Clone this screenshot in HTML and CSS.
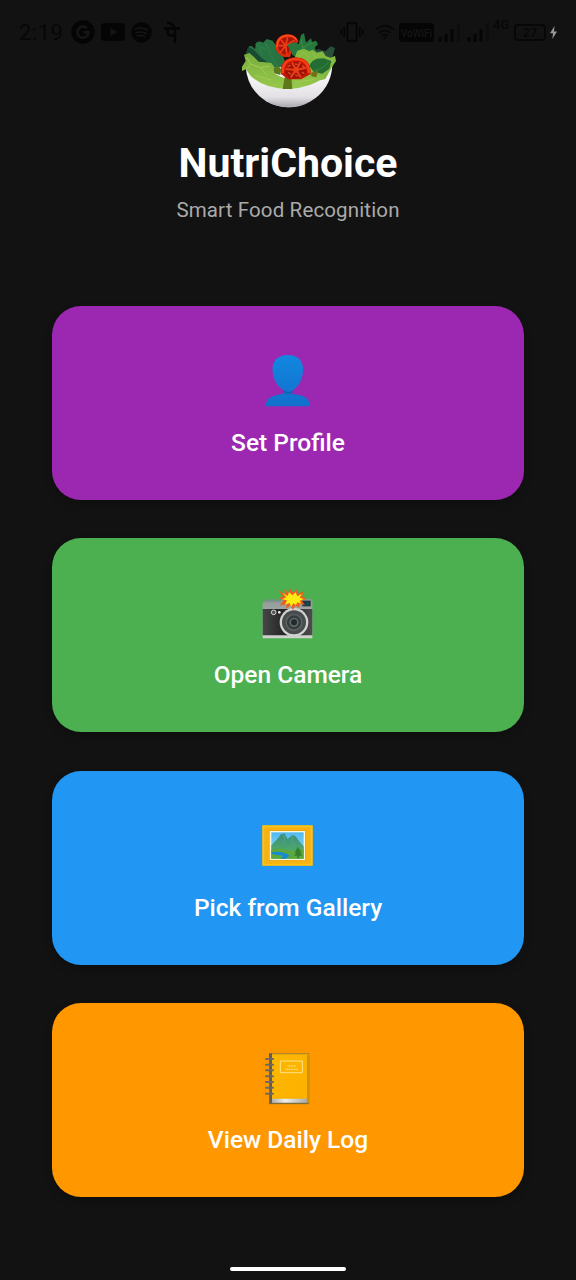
FILE: index.html
```html
<!DOCTYPE html>
<html lang="en">
  <head>
    <meta charset="UTF-8" />
    <meta name="viewport" content="width=device-width, initial-scale=1.0" />
    <title>NutriChoice</title>
    <link rel="stylesheet" href="styles.css">
  </head>
  <body>
    <!-- System status bar, drawn over the page -->
    <div class="status-bar">
      <div class="status-group">
        <span class="clock">2:19</span>
        <svg width="24" height="24" viewBox="0 0 24 24">
          <circle cx="12" cy="12" r="11.7" fill="#050505" />
          <path d="M16 8.2A5.6 5.6 0 1 0 17.6 12.4H12.5" fill="none" stroke="#151515" stroke-width="2.6" />
        </svg>
        <svg width="24" height="18" viewBox="0 0 24 18">
          <rect width="24" height="18" rx="4" fill="#050505" />
          <path d="M9.5 5v8l7-4z" fill="#151515" />
        </svg>
        <svg width="21" height="21" viewBox="0 0 21 21">
          <circle cx="10.5" cy="10.5" r="10.3" fill="#050505" />
          <path d="M4 7q7-2.3 13 1M4.7 10.7q6-1.8 11 1M5.5 14q5-1.3 9 .8" fill="none" stroke="#151515" stroke-width="1.7" />
        </svg>
        <svg class="pay-icon" width="16" height="23" viewBox="0 0 16 23">
          <path d="M0 7.5H16M3 1.5Q9 2 11 7.5V22M3.8 7.5V12Q4 15 7.5 14.5L11 13.5" fill="none" stroke="#050505" stroke-width="2.4" />
        </svg>
      </div>
      <div class="status-group status-right">
        <svg width="24" height="20" viewBox="0 0 24 20">
          <path d="M7.5 1h9v18h-9zM4.3 5v10M1.2 7.5v5M19.7 5v10M22.8 7.5v5" fill="none" stroke="#050505" stroke-width="1.7" />
        </svg>
        <svg class="wifi-icon" width="20" height="16" viewBox="0 0 20 16">
          <path d="M1 5.5Q10-2 19 5.5M4 9Q10 4 16 9M7 12Q10 9.5 13 12" fill="none" stroke="#080808" stroke-width="1.7" />
          <circle cx="10" cy="14" r="1.4" fill="#080808" />
        </svg>
        <span class="vowifi">VoWiFi</span>
        <svg class="signal-icon" width="24" height="19" viewBox="0 0 24 19">
          <path d="M2 19v-5M8 19v-8M14 19V6" stroke="#050505" stroke-width="3" />
          <path d="M20.5 19V0" stroke="#0d0d0d" stroke-width="3" />
        </svg>
        <svg class="signal-icon" width="24" height="19" viewBox="0 0 24 19">
          <path d="M2 19v-5M8 19v-8M14 19V6" stroke="#050505" stroke-width="3" />
          <path d="M20.5 19V0" stroke="#0d0d0d" stroke-width="3" />
        </svg>
        <span class="network">4G</span>
        <span class="battery">27</span>
        <svg class="bolt-icon" width="7" height="13" viewBox="0 0 7 13">
          <path d="M4.5 0L0 7.2h3L2.4 13L7 5.5H4z" fill="#999" />
        </svg>
      </div>
    </div>

    <header class="header">
      <svg class="logo" viewBox="0 0 348 300">
        <defs>
          <linearGradient id="bowl" x2="0" y2="1">
            <stop offset=".3" stop-color="#f4f3f5" />
            <stop offset=".75" stop-color="#e3e1e4" />
            <stop offset="1" stop-color="#aaa8ad" />
          </linearGradient>
          <linearGradient id="lettuce" x2="0" y2="1">
            <stop offset="0" stop-color="#78ad3c" />
            <stop offset="1" stop-color="#98c94d" />
          </linearGradient>
        </defs>
        <path d="M47 140Q52 208 108 244Q174 280 242 244Q302 208 307 138Z" fill="url(#bowl)" />
        <path d="M112 246Q176 267 240 245Q210 263 174 262Q140 261 112 246Z" fill="#b5b2b8" />
        <!-- back leaves -->
        <path d="M48 100L58 78Q68 76 75 88L78 68Q90 61 99 68L110 57L128 62L140 80L160 110L170 140L110 145Z" fill="#287342" />
        <path d="M53 82Q70 83 92 112L115 129L78 131L48 106Z" fill="#174b32" />
        <path d="M76 74Q112 79 142 137M105 68L125 100M89 82L96 108" fill="none" stroke="#34804a" stroke-width="3" />
        <path d="M286 94L302 79L315 84L307 111L280 122L256 95L264 87Z" fill="#294f3b" />
        <!-- back tomato -->
        <path d="M136 82Q136 47 170 43Q195 41 206 64L190 80L180 112L161 111Q138 100 136 82Z" fill="#d92a0c" />
        <path d="M145 82Q145 54 171 50Q190 49 198 63L184 78L172 106Q147 99 145 82Z" fill="#a81508" />
        <path d="M146 77L167 77L173 51M167 77L194 61M167 77L171 106M167 77L150 98M167 77L153 59" fill="none" stroke="#e83d18" stroke-width="5" />
        <path d="M141 82Q141 50 171 47Q190 45 200 60" fill="none" stroke="#ff4b16" stroke-width="5" />
        <path d="M172 74L196 66L206 73L213 45L222 40L228 68L243 55L246 66L258 62L264 72L254 83L262 98L248 112L214 116L188 106Z" fill="#27783c" />
        <path d="M208 109L218 84L213 59M218 84L248 67" fill="none" stroke="#3b8d48" stroke-width="3" />
        <!-- light leaves -->
        <path d="M192 118L202 92L222 86L238 94L248 89L260 98L278 94L287 108L301 113L315 108L318 123L304 144L286 177L233 190Z" fill="#83b940" />
        <path d="M204 113L220 96L238 114M248 98L262 123M286 135L309 119" fill="none" stroke="#94c34c" stroke-width="3" />
        <path d="M238 137Q244 122 260 116L281 115L304 123L298 146L277 161L251 155Z" fill="#246d32" />
        <path d="M253 151Q279 148 295 127" fill="none" stroke="#358541" stroke-width="3" />
        <path d="M36 140L47 123L42 104L58 99L72 111L86 125L105 127L124 129L133 141L131 160L154 171L172 177L193 177L222 164L253 164L286 169Q242 205 175 207Q104 207 62 168L48 148L36 153Z" fill="url(#lettuce)" />
        <path d="M50 112L62 132L91 143L119 139M62 132L51 147M91 143L110 165M75 166L124 180M195 187L252 178" fill="none" stroke="#a5cb53" stroke-width="3" />
        <path d="M131 145L143 137L154 148L151 165L132 160ZM164 172L184 170L187 207L158 207Z" fill="#5e7919" />
        <path d="M243 159L264 151L259 172L244 169Z" fill="#766f19" />
        <!-- front tomato -->
        <path d="M153 162Q149 113 197 112Q244 114 242 162L213 178H174Z" fill="#c41708" />
        <path d="M158 160Q156 119 197 117Q237 119 237 160" fill="none" stroke="#f83f13" stroke-width="8" />
        <path d="M166 160Q166 128 197 125Q229 128 229 160L208 175H178Z" fill="#9e1208" />
        <path d="M198 150L186 127M198 150L211 127M198 150L229 143M198 150L167 147M198 150L213 172M198 150L182 172" fill="none" stroke="#ea3e19" stroke-width="6" />
        <circle cx="198" cy="150" r="8" fill="#ea3e19" />
        <path d="M174 139L181 136M196 132L201 133M218 137L222 143M197 165L203 168M176 158L182 162M217 157L222 160" stroke="#d94c1e" stroke-width="4" stroke-linecap="round" />
      </svg>
      <h1 class="title">NutriChoice</h1>
      <p class="subtitle">Smart Food Recognition</p>
    </header>

    <main class="menu">
      <button class="card card-profile">
        <svg class="card-icon" viewBox="0 -9 228 228">
          <defs>
            <linearGradient id="person" x2="0" y2="1">
              <stop offset="0" stop-color="#1287df" />
              <stop offset="1" stop-color="#1170cc" />
            </linearGradient>
          </defs>
          <path d="M46 184Q48 157 78 151L99 146Q108 142 102 136Q78 123 70 93Q62 58 79 42Q92 30 113 30Q135 30 148 42Q164 58 157 93Q149 124 126 137Q120 143 130 147L151 151Q179 157 181 184Z" fill="url(#person)" />
          <path d="M99 142Q114 153 129 142L126 137Q114 146 102 136Z" fill="#0b62b8" />
        </svg>
        <span class="card-label">Set Profile</span>
      </button>

      <button class="card card-camera">
        <svg class="card-icon" viewBox="0 -16 228 228">
          <defs>
            <linearGradient id="metal" x2="0" y2="1">
              <stop offset="0" stop-color="#8d9794" />
              <stop offset="1" stop-color="#d0d3d2" />
            </linearGradient>
            <linearGradient id="grip">
              <stop offset="0" stop-color="#464646" />
              <stop offset=".5" stop-color="#202020" />
              <stop offset="1" stop-color="#4d4d4d" />
            </linearGradient>
          </defs>
          <path d="M43 57H92V66H43Z" fill="#77908a" />
          <path d="M38 68Q38 64 44 64H91L96 56H181Q187 57 187 64V174H38Z" fill="url(#metal)" />
          <path d="M38 86H187V165H38Z" fill="url(#grip)" />
          <rect x="157" y="61" width="25" height="17" fill="#27333a" />
          <rect x="166" y="64" width="12" height="11" fill="#14465a" />
          <path d="M63 86H94V102H63Z" fill="#252525" />
          <circle cx="71" cy="96" r="7" fill="#555" stroke="#ddd" stroke-width="3" />
          <circle cx="88" cy="96" r="4" fill="#eee" />
          <circle cx="132" cy="126" r="43" fill="#d1d1d1" />
          <circle cx="132" cy="126" r="36" fill="#484c4d" />
          <circle cx="132" cy="126" r="26" fill="#5b6061" />
          <circle cx="132" cy="126" r="21" fill="#333b3c" />
          <circle cx="132" cy="126" r="14" fill="#606768" />
          <circle cx="132" cy="126" r="9" fill="#242a2b" />
          <path d="M82 29L105 42L103 26L115 38L120 24L130 38L141 27L144 41L163 32L156 48L169 55L155 61L165 74L148 71L148 83L136 75L129 89L121 75L108 85L110 71L89 76L101 60L87 54L100 48Z" fill="#f15b20" />
          <path d="M97 38L113 47L117 36L128 45L137 36L142 48L156 40L149 52L162 56L149 61L154 70L142 66L138 75L130 69L123 80L119 68L105 73L111 60L96 57L109 51Z" fill="#ffeb12" />
        </svg>
        <span class="card-label">Open Camera</span>
      </button>

      <button class="card card-gallery">
        <svg class="card-icon" viewBox="0 -15 228 228">
          <defs>
            <linearGradient id="sky" x2="0" y2="1">
              <stop offset="0" stop-color="#4eb9f3" />
              <stop offset="1" stop-color="#a1e2ef" />
            </linearGradient>
            <linearGradient id="mountain" x2="0" y2="1">
              <stop offset="0" stop-color="#388d80" />
              <stop offset="1" stop-color="#59b561" />
            </linearGradient>
          </defs>
          <rect x="37" y="40" width="151" height="121" fill="#f6b313" />
          <path d="M40 43H185V158H40Z" fill="none" stroke="#ffc313" stroke-width="5" />
          <rect x="57" y="55" width="110" height="90" fill="#e6a013" />
          <rect x="59" y="57" width="106" height="87" fill="#faf7df" />
          <rect x="64" y="61" width="97" height="79" fill="url(#sky)" />
          <path d="M64 100L80 83L93 67L103 64L113 81L127 69L137 73L149 89L161 103V140H64Z" fill="url(#mountain)" />
          <path d="M64 113Q91 105 115 116Q140 118 161 110V140H64Z" fill="#5ba83d" />
          <path d="M98 66L105 81L96 94M129 70L125 88L138 102" fill="none" stroke="#57a389" stroke-width="3" />
          <path d="M64 121Q84 117 101 122Q117 126 118 132L107 140H91Q103 133 94 130Q80 130 64 125Z" fill="#168bd1" />
          <path d="M143 105L134 122H139L132 131H142V139H147V131H157L150 121H155Z" fill="#347f2e" />
        </svg>
        <span class="card-label">Pick from Gallery</span>
      </button>

      <button class="card card-log">
        <svg class="card-icon" viewBox="0 -2 228 228">
          <defs>
            <linearGradient id="cover" x2="1" y2="1">
              <stop offset="0" stop-color="#fab800" />
              <stop offset="1" stop-color="#ffb000" />
            </linearGradient>
            <linearGradient id="pages">
              <stop offset="0" stop-color="#aaa" />
              <stop offset=".4" stop-color="#eee" />
              <stop offset="1" stop-color="#aaa" />
            </linearGradient>
          </defs>
          <path d="M57 38H178V191H58Z" fill="#9c8237" />
          <path d="M63 41H177V185H63Z" fill="url(#cover)" />
          <path d="M62 174H171V188H62Z" fill="url(#pages)" />
          <path d="M59 188H175" stroke="#816e35" stroke-width="4" />
          <path d="M174 42V188" stroke="#c88c00" stroke-width="5" />
          <path d="M57 38H66V186L58 191Z" fill="#615e56" />
          <path d="M48 55H69M48 72H69M48 89H69M48 107H69M48 124H69M48 141H69M48 159H69" stroke="#6d695f" stroke-width="6" stroke-linecap="round" />
          <path d="M91 61H157V96H91Z" fill="none" stroke="#ffe387" stroke-width="3" />
          <path d="M112 76H138M106 86H144" stroke="#ffe387" stroke-width="3" stroke-dasharray="4 1" />
        </svg>
        <span class="card-label">View Daily Log</span>
      </button>
    </main>

    <div class="home-indicator"></div>
  </body>
</html>
```
FILE: styles.css
```css
* {
  box-sizing: border-box;
}

body {
  margin: 0;
  height: 1280px;
  display: flex;
  flex-direction: column;
  align-items: center;
  background: #121212;
  color: #fff;
  font-family: Roboto, sans-serif;
  position: relative;
  overflow: hidden;
}

svg {
  display: block;
  flex-shrink: 0;
}

.status-bar {
  position: absolute;
  top: 16px;
  left: 0;
  width: 100%;
  height: 32px;
  padding: 0 19px;
  display: flex;
  justify-content: space-between;
  align-items: center;
  color: #070707;
}

.status-group {
  display: flex;
  align-items: center;
  gap: 6px;
}

.clock {
  width: 46px;
  font-size: 22px;
  letter-spacing: 0.5px;
}

.pay-icon {
  margin-left: 6px;
}

.status-right {
  gap: 4px;
}

.wifi-icon {
  margin-left: 7px;
}

.vowifi {
  width: 35px;
  height: 19px;
  border-radius: 3px;
  background: #050505;
  color: #151515;
  font-size: 10px;
  font-weight: 500;
  line-height: 21px;
  text-align: center;
}

.signal-icon {
  margin-right: 1px;
}

.network {
  width: 17px;
  margin: -14px 0 0 -3px;
  font-size: 13px;
  font-weight: 500;
  line-height: 16px;
}

.battery {
  width: 32px;
  height: 17px;
  border: 2px solid #070707;
  border-radius: 4px;
  font-size: 13px;
  font-weight: 500;
  line-height: 13px;
  text-align: center;
}

.header {
  display: flex;
  flex-direction: column;
  align-items: center;
  height: 305.7px;
  padding-top: 20px;
}

.logo {
  width: 116px;
  height: 100px;
}

.title {
  margin: 19px 0 0;
  font-size: 41px;
  font-weight: 700;
  line-height: 48px;
}

.subtitle {
  margin: 11px 0 0;
  color: #aaa;
  font-size: 20.5px;
  line-height: 25px;
  letter-spacing: 0.14px;
}

.menu {
  width: 472px;
  display: flex;
  flex-direction: column;
  gap: 38.5px;
}

.card {
  height: 194px;
  padding: 36.4px 0 0;
  display: flex;
  flex-direction: column;
  align-items: center;
  border: none;
  border-radius: 29px;
  color: #fff;
  font-family: inherit;
  box-shadow: 0 4px 8px rgba(0, 0, 0, 0.22);
  cursor: pointer;
}

.card-profile {
  background: #9c27b0;
}

.card-camera {
  background: #4caf50;
}

.card-gallery {
  background: #2196f3;
}

.card-log {
  background: #ff9800;
}

.card-icon {
  width: 76px;
  height: 76px;
}

.card-label {
  margin-top: 9.8px;
  font-size: 24.5px;
  font-weight: 500;
  line-height: 30px;
}

.home-indicator {
  width: 116px;
  height: 4px;
  margin-top: 69.5px;
  border-radius: 2px;
  background: #fff;
}
```
